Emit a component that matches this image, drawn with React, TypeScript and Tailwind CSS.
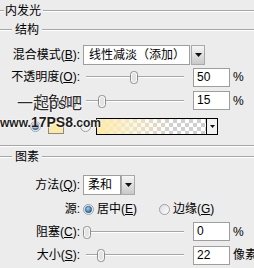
import React from "react";

const font = "font-['Liberation_Sans','Noto_Sans_CJK_SC',sans-serif]";

const Rule = ({ className = "" }: { className?: string }) => (
    <div className={`h-[2px] border-t border-b border-t-[#a6a6a6] border-b-white ${className}`} />
);

const GroupTitle: React.FC<{ text: string; lead: string; pad: string; className?: string }> = ({
    text,
    lead,
    pad,
    className = "",
}) => (
    <div className={`flex items-center ${className}`}>
        <Rule className={lead} />
        <span className={`leading-none ${pad}`}>{text}</span>
        <Rule className="flex-1" />
    </div>
);

const Arrow = ({ className = "" }: { className?: string }) => (
    <div
        className={`flex items-center justify-center border border-[#a9a9a9] bg-linear-to-b from-[#f6f6f6] to-[#c9c9c9] ${className}`}
    >
        <svg width="7" height="4" viewBox="0 0 7 4">
            <path d="M0 0h7L3.5 4z" fill="#111" />
        </svg>
    </div>
);

const Thumb = () => (
    <svg width="8" height="13" viewBox="0 0 8 13">
        <rect x="0.5" y="0.5" width="7" height="12" rx="3" fill="#f7f7f7" stroke="#8c8c8c" />
        <rect x="2" y="2" width="4" height="9" rx="2" fill="#e4e4e4" />
    </svg>
);

const Slider: React.FC<{ at: number }> = ({ at }) => (
    <div className="relative w-[101px] h-[14px] shrink-0 flex items-center">
        <Rule className="ml-[3px] w-[98px]" />
        <div className="absolute top-[1px]" style={{ left: at - 4 }}>
            <Thumb />
        </div>
    </div>
);

const Radio: React.FC<{ on?: boolean }> = ({ on }) => (
    <svg width="11" height="11" viewBox="0 0 11 11" className="shrink-0">
        <defs>
            <radialGradient id="rg" cx="40%" cy="35%" r="70%">
                <stop offset="0" stopColor="#9fd0f0" />
                <stop offset="1" stopColor="#1d5f94" />
            </radialGradient>
            <linearGradient id="off" x1="0" y1="0" x2="1" y2="1">
                <stop offset="0" stopColor="#dcdcdc" />
                <stop offset="1" stopColor="#ffffff" />
            </linearGradient>
        </defs>
        <circle cx="5.5" cy="5.5" r="5" fill="url(#off)" stroke="#9aa0a8" />
        {on && <circle cx="5.5" cy="5.5" r="3.2" fill="url(#rg)" stroke="#24527a" strokeWidth="0.6" />}
    </svg>
);

const Field: React.FC<{ value: string; unit: string }> = ({ value, unit }) => (
    <div className="ml-[9px] flex items-center shrink-0 whitespace-nowrap">
        <div className="w-[37px] h-[19px] shrink-0 border border-[#9e9e9e] bg-white pl-[3px] leading-[17px]">
            {value}
        </div>
        <span className="ml-[3px]">{unit}</span>
    </div>
);

const Row: React.FC<{ label: React.ReactNode; className: string; children: React.ReactNode }> = ({
    label,
    className,
    children,
}) => (
    <div className={`flex items-center ${className}`}>
        <div className="w-[80px] shrink-0 text-right whitespace-nowrap">{label}</div>
        <div className="ml-[3px] flex items-center shrink-0 whitespace-nowrap">{children}</div>
    </div>
);

export default function App() {
    return (
        <div className={`relative w-[254px] h-[268px] overflow-hidden bg-[#ececec] text-[12px] text-black ${font}`}>
            <GroupTitle text="内发光" lead="w-[4px]" pad="pl-[1px] pr-[2px]" className="h-[21px]" />
            <GroupTitle text="结构" lead="w-[12px]" pad="px-[3px]" className="h-[17px]" />

            <Row label={<>混合模式(<u>B</u>):</>} className="h-[23px] mt-[5px]">
                <div className="flex h-[20px]">
                    <div className="w-[107px] border border-[#9e9e9e] bg-white pl-[5px] leading-[18px]">
                        线性减淡（添加）
                    </div>
                    <Arrow className="w-[14px] ml-[1px]" />
                </div>
            </Row>
            <Row label={<>不透明度(<u>O</u>):</>} className="h-[22px]">
                <Slider at={50.5} />
                <Field value="50" unit="%" />
            </Row>
            <Row label={<>杂色(<u>N</u>):</>} className="h-[25px]">
                <Slider at={19} />
                <Field value="15" unit="%" />
            </Row>

            <div className="flex items-center h-[26px] pl-[30px]">
                <Radio on />
                <div className="ml-[7px] w-[16px] h-[16px] border border-[#8a8a8a] bg-[#fee9a4]" />
                <div className="ml-[16px] flex">
                    <Radio />
                </div>
                <div className="ml-[5px] flex h-[17px] w-[122px] border border-black">
                    <div className="flex-1 bg-[conic-gradient(#cfcfcf_25%,#fff_0_50%,#cfcfcf_0_75%,#fff_0)] bg-[length:8px_8px]">
                        <div className="h-full bg-linear-to-r from-[#feeaa6] via-[#fdf0c8]/70 via-30% to-transparent to-70%" />
                    </div>
                    <div className="w-[11px] border-l border-black bg-[#f2f2f2] flex items-center justify-center">
                        <svg width="5" height="3" viewBox="0 0 5 3">
                            <path d="M0 0h5L2.5 3z" fill="#111" />
                        </svg>
                    </div>
                </div>
            </div>

            <Rule className="mt-[6px]" />
            <GroupTitle text="图素" lead="w-[12px]" pad="px-[3px]" className="h-[20px]" />

            <Row label={<>方法(<u>Q</u>):</>} className="h-[23px] mt-[6px]">
                <div className="flex h-[20px]">
                    <div className="w-[38px] border border-[#9e9e9e] bg-white pl-[4px] leading-[18px]">柔和</div>
                    <Arrow className="w-[14px]" />
                </div>
            </Row>
            <Row label="源:" className="h-[24px] mt-[1px]">
                <Radio on />
                <span className="ml-[3px]">
                    居中(<u>E</u>)
                </span>
                <div className="ml-[22px] flex items-center">
                    <Radio />
                </div>
                <span className="ml-[3px]">
                    边缘(<u>G</u>)
                </span>
            </Row>
            <Row label={<>阻塞(<u>C</u>):</>} className="h-[21px]">
                <Slider at={3.5} />
                <Field value="0" unit="%" />
            </Row>
            <Row label={<>大小(<u>S</u>):</>} className="h-[24px] mt-[1px]">
                <Slider at={17.5} />
                <Field value="22" unit="像素" />
            </Row>

            <div className="absolute left-[17px] top-[96px] text-[16px] leading-none text-[#2a2a2a] [text-shadow:0_0_2px_#fff,0_0_2px_#fff,0_0_1px_#fff]">
                一起ps吧
            </div>
            <div className="absolute left-0 top-[115px] font-bold leading-none text-[#1e1e1e] [text-shadow:0_0_2px_#fff,0_0_2px_#fff,0_0_1px_#fff] whitespace-nowrap">
                <span className="text-[12px]">www.</span>
                <span className="text-[14px]">17PS8</span>
                <span className="text-[12px]">.com</span>
            </div>
        </div>
    );
}
